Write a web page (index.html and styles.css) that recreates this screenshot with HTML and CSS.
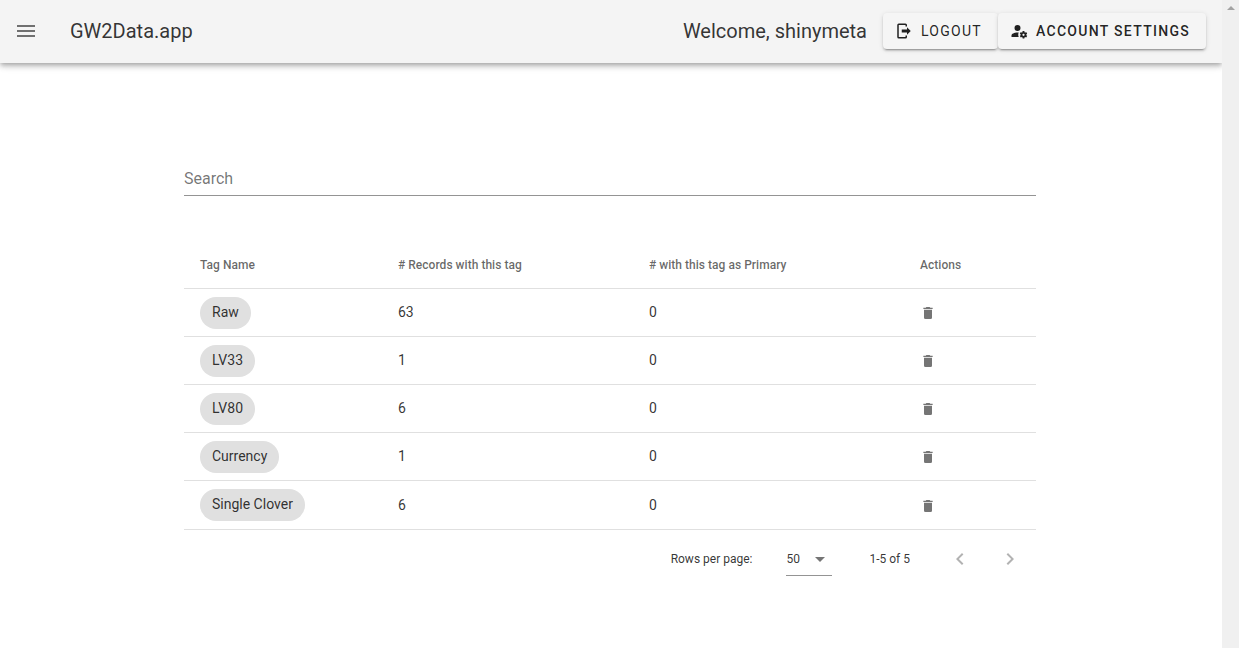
FILE: index.html
```html
<!DOCTYPE html>
<html lang="en">
<head>
<meta charset="utf-8">
<title>GW2Data.app</title>
<link rel="stylesheet" href="styles.css">
</head>
<body>
<svg class="defs" aria-hidden="true">
  <symbol id="trash" viewBox="0 0 24 24"><path d="M19,4H15.5L14.5,3H9.5L8.5,4H5V6H19M6,19A2,2 0 0,0 8,21H16A2,2 0 0,0 18,19V7H6V19Z"/></symbol>
</svg>
<div class="window">
  <div class="page">
    <header class="toolbar">
      <svg class="menu" viewBox="0 0 24 24"><path d="M3,6H21V8H3V6M3,11H21V13H3V11M3,16H21V18H3V16Z"/></svg>
      <div class="title">GW2Data.app</div>
      <div class="welcome">Welcome, shinymeta</div>
      <button class="btn logout"><svg viewBox="0 0 24 24"><path d="M16,17V14H9V10H16V7L21,12L16,17M14,2A2,2 0 0,1 16,4V6H14V4H5V20H14V18H16V20A2,2 0 0,1 14,22H5A2,2 0 0,1 3,20V4A2,2 0 0,1 5,2H14Z"/></svg><span>LOGOUT</span></button>
      <button class="btn settings"><svg viewBox="0 0 24 24"><path d="M10 4A4 4 0 0 0 6 8A4 4 0 0 0 10 12A4 4 0 0 0 14 8A4 4 0 0 0 10 4M17 12C16.87 12 16.76 12.09 16.74 12.21L16.55 13.53C16.25 13.66 15.96 13.82 15.7 14L14.46 13.5C14.35 13.5 14.22 13.5 14.15 13.63L13.15 15.36C13.09 15.47 13.11 15.6 13.21 15.68L14.27 16.5C14.25 16.67 14.24 16.83 14.24 17C14.24 17.17 14.25 17.33 14.27 17.5L13.21 18.32C13.12 18.4 13.09 18.53 13.15 18.64L14.15 20.37C14.21 20.5 14.34 20.5 14.46 20.5L15.7 20C15.96 20.18 16.24 20.35 16.55 20.47L16.74 21.79C16.76 21.91 16.86 22 17 22H19C19.11 22 19.22 21.91 19.24 21.79L19.43 20.47C19.73 20.34 20 20.18 20.27 20L21.5 20.5C21.63 20.5 21.76 20.5 21.83 20.37L22.83 18.64C22.89 18.53 22.86 18.4 22.77 18.32L21.7 17.5C21.72 17.33 21.74 17.17 21.74 17C21.74 16.83 21.73 16.67 21.7 16.5L22.76 15.68C22.85 15.6 22.88 15.47 22.82 15.36L21.82 13.63C21.76 13.5 21.63 13.5 21.5 13.5L20.27 14C20 13.82 19.73 13.65 19.42 13.53L19.23 12.21C19.22 12.09 19.11 12 19 12H17M10 14C5.58 14 2 15.79 2 18V20H11.68A7 7 0 0 1 11 17A7 7 0 0 1 11.64 14.09C11.11 14.03 10.56 14 10 14M18 15.5C18.83 15.5 19.5 16.17 19.5 17C19.5 17.83 18.83 18.5 18 18.5C17.16 18.5 16.5 17.83 16.5 17C16.5 16.17 17.17 15.5 18 15.5Z"/></svg><span>ACCOUNT SETTINGS</span></button>
    </header>
    <main class="content">
      <div class="search">Search</div>
      <div class="table">
        <div class="row head"><span>Tag Name</span><span># Records with this tag</span><span># with this tag as Primary</span><span>Actions</span></div>
        <div class="row"><div><span class="chip">Raw</span></div><span class="num">63</span><span class="num">0</span><svg class="trash"><use href="#trash"/></svg></div>
        <div class="row"><div><span class="chip">LV33</span></div><span class="num">1</span><span class="num">0</span><svg class="trash"><use href="#trash"/></svg></div>
        <div class="row"><div><span class="chip">LV80</span></div><span class="num">6</span><span class="num">0</span><svg class="trash"><use href="#trash"/></svg></div>
        <div class="row"><div><span class="chip">Currency</span></div><span class="num">1</span><span class="num">0</span><svg class="trash"><use href="#trash"/></svg></div>
        <div class="row last"><div><span class="chip">Single Clover</span></div><span class="num">6</span><span class="num">0</span><svg class="trash"><use href="#trash"/></svg></div>
      </div>
      <footer class="pager">
        <span class="label">Rows per page:</span>
        <div class="select"><span>50</span><svg viewBox="0 0 24 24"><path d="M7,10L12,15L17,10H7Z"/></svg></div>
        <span class="range">1-5 of 5</span>
        <svg class="arrow" viewBox="0 0 24 24"><path d="M15.41,16.58L10.83,12L15.41,7.41L14,6L8,12L14,18L15.41,16.58Z"/></svg>
        <svg class="arrow next" viewBox="0 0 24 24"><path d="M8.59,16.58L13.17,12L8.59,7.41L10,6L16,12L10,18L8.59,16.58Z"/></svg>
      </footer>
    </main>
  </div>
  <div class="scrollbar"><svg viewBox="0 0 8 4"><path d="M0 4L4 0L8 4Z"/></svg></div>
</div>
</body>
</html>
```
FILE: styles.css
```css
* { box-sizing: border-box; }
body { margin: 0; font-family: Roboto, sans-serif; color: rgba(0,0,0,.8); background: #fff; overflow: hidden; }
svg { fill: currentColor; display: block; flex: none; }
.defs { display: none; }
.window { display: flex; height: 648px; }
.page { width: 1222px; flex: none; overflow: hidden; }
.scrollbar { flex: 1; background: #f0f0f0; padding: 6px 0 0 5px; color: #a3a3a3; }
.scrollbar svg { width: 8px; height: 4px; }

.toolbar { display: flex; align-items: center; height: 63px; padding: 0 16px 1px 14px; background: #f4f4f4;
  box-shadow: 0 2px 4px -1px rgba(0,0,0,.2), 0 4px 5px 0 rgba(0,0,0,.14), 0 1px 10px 0 rgba(0,0,0,.12); }
.menu { width: 24px; height: 24px; color: rgba(0,0,0,.54); }
.title, .welcome { font-size: 20px; font-weight: 400; line-height: 30px; white-space: nowrap; }
.title { margin-left: 32px; }
.welcome { margin-left: auto; margin-right: 16px; }
.btn { display: flex; align-items: center; height: 36px; border: 0; border-radius: 4px; padding: 0 0 0 12px; background: #f5f5f5;
  color: rgba(0,0,0,.87); font: 400 14px Roboto, sans-serif; letter-spacing: 1.25px; white-space: nowrap;
  box-shadow: 0 3px 1px -2px rgba(0,0,0,.2), 0 2px 2px 0 rgba(0,0,0,.14), 0 1px 5px 0 rgba(0,0,0,.12); }
.btn svg { width: 18px; height: 18px; margin-right: 8px; }
.logout { width: 115px; }
.settings { width: 208px; font-weight: 500; letter-spacing: 1.3px; }

.content { width: 852px; margin-left: 184px; padding-top: 100px; }
.search { height: 33px; border-bottom: 1px solid rgba(0,0,0,.42); color: rgba(0,0,0,.55); font-size: 16px; font-weight: 400; line-height: 31px; }
.table { margin-top: 45px; }
.row { display: grid; grid-template-columns: 198px 251px 271px 1fr; align-items: center; height: 48px; padding: 0 16px;
  border-bottom: 1px solid rgba(0,0,0,.12); font-size: 14px; font-weight: 400; }
.head { color: rgba(0,0,0,.6); font-size: 12px; font-weight: 500; letter-spacing: .03px; }
.num { padding-bottom: 2px; }
.last { height: 49px; }
.last .num { padding-bottom: 0; }
.last .trash { margin-top: 1px; }
.last > div { height: 32px; }
.chip { display: inline-flex; height: 32px; padding: 0 12px; border-radius: 16px; background: #e0e0e0; line-height: 31px; vertical-align: top; }
.trash { width: 16px; height: 16px; color: rgba(0,0,0,.54); }

.pager { display: flex; align-items: center; height: 58px; padding-right: 14px; justify-content: flex-end; font-size: 12px; font-weight: 400; white-space: nowrap; }
.select { display: flex; align-items: center; width: 46px; height: 33px; margin: 1px 0 0 34px; border-bottom: 1px solid rgba(0,0,0,.42); }
.select svg { width: 24px; height: 24px; margin-left: 8px; color: rgba(0,0,0,.54); }
.range { margin-left: 37px; }
.arrow { width: 24px; height: 24px; margin-left: 38px; color: rgba(0,0,0,.3); }
.next { margin-left: 26px; }
```
